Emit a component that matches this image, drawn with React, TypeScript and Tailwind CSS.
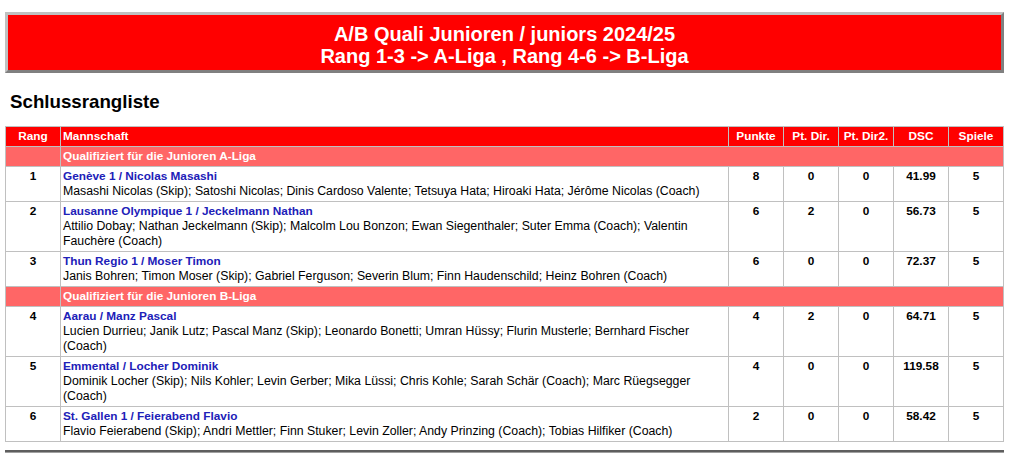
const teams = [
    {
        rang: 1,
        name: "Genève 1 / Nicolas Masashi",
        players: "Masashi Nicolas (Skip); Satoshi Nicolas; Dinis Cardoso Valente; Tetsuya Hata; Hiroaki Hata; Jérôme Nicolas (Coach)",
        punkte: 8, dir: 0, dir2: 0, dsc: "41.99", spiele: 5
    },
    {
        rang: 2,
        name: "Lausanne Olympique 1 / Jeckelmann Nathan",
        players: "Attilio Dobay; Nathan Jeckelmann (Skip); Malcolm Lou Bonzon; Ewan Siegenthaler; Suter Emma (Coach); Valentin Fauchère (Coach)",
        punkte: 6, dir: 2, dir2: 0, dsc: "56.73", spiele: 5
    },
    {
        rang: 3,
        name: "Thun Regio 1 / Moser Timon",
        players: "Janis Bohren; Timon Moser (Skip); Gabriel Ferguson; Severin Blum; Finn Haudenschild; Heinz Bohren (Coach)",
        punkte: 6, dir: 0, dir2: 0, dsc: "72.37", spiele: 5
    },
    {
        rang: 4,
        name: "Aarau / Manz Pascal",
        players: "Lucien Durrieu; Janik Lutz; Pascal Manz (Skip); Leonardo Bonetti; Umran Hüssy; Flurin Musterle; Bernhard Fischer (Coach)",
        punkte: 4, dir: 2, dir2: 0, dsc: "64.71", spiele: 5
    },
    {
        rang: 5,
        name: "Emmental / Locher Dominik",
        players: "Dominik Locher (Skip); Nils Kohler; Levin Gerber; Mika Lüssi; Chris Kohle; Sarah Schär (Coach); Marc Rüegsegger (Coach)",
        punkte: 4, dir: 0, dir2: 0, dsc: "119.58", spiele: 5
    },
    {
        rang: 6,
        name: "St. Gallen 1 / Feierabend Flavio",
        players: "Flavio Feierabend (Skip); Andri Mettler; Finn Stuker; Levin Zoller; Andy Prinzing (Coach); Tobias Hilfiker (Coach)",
        punkte: 2, dir: 0, dir2: 0, dsc: "58.42", spiele: 5
    }
]

type Team = (typeof teams)[number]

function GroupRow({ label }: { label: string }) {
    return (
        <tr className="bg-[#ff6666] text-white font-bold">
            <td className="border border-[#c0c0c0] px-[2px] py-[2px]"></td>
            <td colSpan={6} className="border border-[#c0c0c0] px-[2px] py-[2px]">
                {label}
            </td>
        </tr>
    )
}

function TeamRow({ t }: { t: Team }) {
    const num = "border border-[#c0c0c0] px-[2px] py-[2px] text-center align-top font-bold"
    return (
        <tr className="bg-white">
            <td className={num}>{t.rang}</td>
            <td className="border border-[#c0c0c0] px-[2px] py-[2px] align-top">
                <div className="font-bold text-[#2020b8]">{t.name}</div>
                <div className="text-[12.3px]">{t.players}</div>
            </td>
            <td className={num}>{t.punkte}</td>
            <td className={num}>{t.dir}</td>
            <td className={num}>{t.dir2}</td>
            <td className={num}>{t.dsc}</td>
            <td className={num}>{t.spiele}</td>
        </tr>
    )
}

export default function App() {
    return (
        <div className="bg-white w-[1013px] h-[460px] overflow-hidden px-[5px] pt-[12px] font-['Liberation_Sans',Arial,sans-serif] text-black">
            {/* TITLE BANNER */}
            <div className="w-[999px] bg-[#ff0000] border-[3px] border-t-[#c0c0c0] border-l-[#c0c0c0] border-b-[#808080] border-r-[#808080] pt-[8px] pb-[3px] text-center text-white font-bold text-[20px] leading-[22px]">
                <div>A/B Quali Junioren / juniors 2024/25</div>
                <div>Rang 1-3 -&gt; A-Liga , Rang 4-6 -&gt; B-Liga</div>
            </div>

            <h2 className="mt-[18px] ml-[5px] text-[18.72px] font-bold leading-[21px]">Schlussrangliste</h2>

            {/* RANKING TABLE */}
            <table className="mt-[14px] w-[999px] table-fixed border-collapse border border-[#c0c0c0] text-[11.8px] leading-[15px]">
                <colgroup>
                    <col className="w-[55px]" />
                    <col />
                    <col className="w-[55px]" />
                    <col className="w-[55px]" />
                    <col className="w-[55px]" />
                    <col className="w-[55px]" />
                    <col className="w-[55px]" />
                </colgroup>
                <thead>
                    <tr className="bg-[#ff0000] text-white font-bold">
                        <th className="border border-[#c0c0c0] px-[2px] py-[2px] text-center">Rang</th>
                        <th className="border border-[#c0c0c0] px-[2px] py-[2px] text-left">Mannschaft</th>
                        <th className="border border-[#c0c0c0] px-[2px] py-[2px] text-center">Punkte</th>
                        <th className="border border-[#c0c0c0] px-[2px] py-[2px] text-center">Pt. Dir.</th>
                        <th className="border border-[#c0c0c0] px-[2px] py-[2px] text-center">Pt. Dir2.</th>
                        <th className="border border-[#c0c0c0] px-[2px] py-[2px] text-center">DSC</th>
                        <th className="border border-[#c0c0c0] px-[2px] py-[2px] text-center">Spiele</th>
                    </tr>
                </thead>
                <tbody>
                    <GroupRow label="Qualifiziert für die Junioren A-Liga" />
                    {teams.slice(0, 3).map((t) => <TeamRow key={t.rang} t={t} />)}
                    <GroupRow label="Qualifiziert für die Junioren B-Liga" />
                    {teams.slice(3).map((t) => <TeamRow key={t.rang} t={t} />)}
                </tbody>
            </table>

            <div className="mt-[8px] w-[999px] border-t-2 border-t-[#5e5e5e] border-b border-b-[#a0a0a0]"></div>
        </div>
    )
}
